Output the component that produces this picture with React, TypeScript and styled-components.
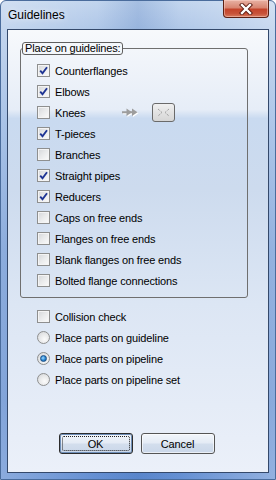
import styled, { createGlobalStyle } from "styled-components";

const GlobalStyle = createGlobalStyle`
    html, body {
        margin: 0;
        padding: 0;
        background: #ffffff;
    }
    body {
        font-family: "Liberation Sans", Arial, sans-serif;
    }
`;

const Window = styled.div`
    width: 276px;
    height: 480px;
    box-sizing: border-box;
    display: flex;
    flex-direction: column;
    padding: 0 6px 6px 6px;
    border-radius: 6px 6px 0 0;
    border: 1px solid #4a6c9c;
    background:
        linear-gradient(90deg, rgba(255, 255, 255, 0.25) 0%, rgba(255, 255, 255, 0) 35%, rgba(40, 90, 170, 0.18) 50%, rgba(255, 255, 255, 0) 65%, rgba(255, 255, 255, 0.3) 100%),
        linear-gradient(180deg, #c2d5ee 0px, #afc7e8 30px, #8eb0e0 120px, #6792d2 250px, #5a87cd 400px, #6590d3 480px);
`;

const TitleBar = styled.div`
    height: 28px;
    display: flex;
    justify-content: space-between;
    align-items: flex-start;
    padding-left: 1px;
`;

const Title = styled.span`
    margin-top: 7px;
    font-size: 12px;
    line-height: 15px;
    color: #000;
    text-shadow: 0 0 6px rgba(255, 255, 255, 0.9);
`;

const CloseButton = styled.div`
    width: 46px;
    height: 18px;
    margin-top: -1px;
    box-sizing: border-box;
    border: 1px solid #5c2014;
    border-top: none;
    border-radius: 0 0 4px 4px;
    background: linear-gradient(180deg, #e8b2a4 0%, #d88672 45%, #c4442b 55%, #c8533a 80%, #d77a5e 100%);
    box-shadow: inset 0 0 0 1px rgba(255, 220, 210, 0.45);
    display: flex;
    align-items: center;
    justify-content: center;
`;

const Client = styled.div`
    flex: 1;
    display: flex;
    flex-direction: column;
    border: 1px solid #34496b;
    background: linear-gradient(180deg, #f7f9fc 0%, #e6edf7 18%, #c9daf0 20%, #cddbee 36%, #dce6f4 62%, #ebf0f9 100%);
    font-size: 11px;
    letter-spacing: -0.15px;
    color: #000;
`;

const GroupBox = styled.fieldset`
    margin: 12px 20px 0 12px;
    padding: 0 0 6px 1px;
    border: 1px solid #6f6f6f;
    border-radius: 3px;
    min-width: 0;
`;

const GroupLabel = styled.legend`
    padding: 0 2px;
    margin: 0;
    border: 1px solid #5f5f5f;
    border-radius: 3px;
    background: #f4f7fb;
    line-height: 11px;
`;

const OptionList = styled.div`
    display: flex;
    flex-direction: column;
    padding: 5px 0 0 15px;
`;

const Row = styled.div`
    height: 21px;
    display: flex;
    align-items: center;
    gap: 5px;
`;

const LabelText = styled.span<{ $minWidth?: number }>`
    min-width: ${(p) => p.$minWidth || 0}px;
    white-space: nowrap;
`;

const Box = styled.span`
    width: 13px;
    height: 13px;
    box-sizing: border-box;
    border: 1px solid #8e8f8f;
    background: linear-gradient(135deg, #d4d6d9 0%, #eaebec 50%, #fbfbfb 100%);
    box-shadow: inset 0 0 0 1px #f4f4f4;
    display: flex;
    align-items: center;
    justify-content: center;
    flex-shrink: 0;
`;

const Round = styled.span<{ $on: boolean }>`
    width: 13px;
    height: 13px;
    box-sizing: border-box;
    border-radius: 50%;
    border: 1px solid #8e8f8f;
    background: radial-gradient(circle at 60% 65%, #fbfbfb 0%, #e6e7e8 55%, #cfd1d4 100%);
    display: flex;
    align-items: center;
    justify-content: center;
    flex-shrink: 0;

    &::after {
        content: "";
        display: ${(p) => (p.$on ? "block" : "none")};
        width: 7px;
        height: 7px;
        box-sizing: border-box;
        border-radius: 50%;
        border: 1px solid #1c4f86;
        background: radial-gradient(circle at 40% 40%, #a6dbff 0%, #2b8ad6 50%, #0f4f95 100%);
    }
`;

const Extras = styled.span`
    display: flex;
    align-items: center;
    gap: 13px;
`;

const SmallButton = styled.span`
    width: 23px;
    height: 19px;
    box-sizing: border-box;
    border: 1px solid #6a6a6a;
    border-radius: 3px;
    background: linear-gradient(180deg, #f0f0f0 0%, #e2e2e2 50%, #d6d6d6 100%);
    display: flex;
    align-items: center;
    justify-content: center;
`;

const BottomOptions = styled.div`
    display: flex;
    flex-direction: column;
    margin-top: 8px;
    padding-left: 29px;
`;

const ButtonRow = styled.div`
    margin-top: auto;
    padding: 0 3px 18px 0;
    display: flex;
    justify-content: center;
    gap: 8px;
`;

const Button = styled.button<{ $default?: boolean }>`
    width: 74px;
    height: 21px;
    box-sizing: border-box;
    padding: 0;
    border: 1px solid ${(p) => (p.$default ? "#2c2c2c" : "#555")};
    border-radius: 3px;
    background: linear-gradient(180deg, #f2f6fb 0%, #e4ebf5 48%, #d3deed 52%, #cad7e9 100%);
    box-shadow: inset 0 0 0 1px ${(p) => (p.$default ? "#6f8fb8" : "rgba(255, 255, 255, 0.6)")};
    font-family: "Liberation Sans", Arial, sans-serif;
    font-size: 11px;
    letter-spacing: -0.15px;
    color: #000;
    position: relative;

    &::after {
        content: "";
        display: ${(p) => (p.$default ? "block" : "none")};
        position: absolute;
        inset: 2px;
        border: 1px dotted #222;
        border-radius: 2px;
    }
`;

const CheckMark = () => (
    <svg width="9" height="9" viewBox="0 0 9 9">
        <path d="M1.2 4.6 L3.5 7.2 L8 1.2" fill="none" stroke="#1f3594" strokeWidth="1.9" />
    </svg>
);

const CloseGlyph = () => (
    <svg width="14" height="12" viewBox="0 0 14 12">
        <path d="M3 2 L11 10 M11 2 L3 10" stroke="#5a1a10" strokeWidth="4.2" strokeLinecap="square" />
        <path d="M3 2 L11 10 M11 2 L3 10" stroke="#ffffff" strokeWidth="2.4" strokeLinecap="square" />
    </svg>
);

const ArrowGlyph = () => (
    <svg width="17" height="10" viewBox="0 0 17 10">
        <g fill="#ffffff" transform="translate(1 1)">
            <rect x="0" y="3.25" width="10" height="2" />
            <path d="M4.5 0.5 L10 4.25 L4.5 8 Z" />
            <path d="M10 0.5 L15.5 4.25 L10 8 Z" />
        </g>
        <g fill="#9d9d9d">
            <rect x="0" y="3.25" width="10" height="2" />
            <path d="M4.5 0.5 L10 4.25 L4.5 8 Z" />
            <path d="M10 0.5 L15.5 4.25 L10 8 Z" />
        </g>
    </svg>
);

const MergeGlyph = () => (
    <svg width="13" height="9" viewBox="0 0 13 9">
        <path d="M1 1 L5 4.5 L1 8 M12 1 L8 4.5 L12 8" fill="none" stroke="#8c8c8c" strokeWidth="1" strokeDasharray="1 1" />
    </svg>
);

interface OptionProps {
    label: string;
    checked: boolean;
    radio?: boolean;
    extras?: boolean;
}

const Option = ({ label, checked, radio, extras }: OptionProps) => (
    <Row>
        {radio ? (
            <Round $on={checked} />
        ) : (
            <Box>{checked && <CheckMark />}</Box>
        )}
        <LabelText $minWidth={extras ? 62 : 0}>{label}</LabelText>
        {extras && (
            <Extras>
                <ArrowGlyph />
                <SmallButton>
                    <MergeGlyph />
                </SmallButton>
            </Extras>
        )}
    </Row>
);

const guidelineParts = [
    { label: "Counterflanges", checked: true },
    { label: "Elbows", checked: true },
    { label: "Knees", checked: false, extras: true },
    { label: "T-pieces", checked: true },
    { label: "Branches", checked: false },
    { label: "Straight pipes", checked: true },
    { label: "Reducers", checked: true },
    { label: "Caps on free ends", checked: false },
    { label: "Flanges on free ends", checked: false },
    { label: "Blank flanges on free ends", checked: false },
    { label: "Bolted flange connections", checked: false },
];

const placeModes = [
    { label: "Place parts on guideline", checked: false },
    { label: "Place parts on pipeline", checked: true },
    { label: "Place parts on pipeline set", checked: false },
];

const App = () => {
    return (
        <>
            <GlobalStyle />
            <Window>
                <TitleBar>
                    <Title>Guidelines</Title>
                    <CloseButton>
                        <CloseGlyph />
                    </CloseButton>
                </TitleBar>
                <Client>
                    <GroupBox>
                        <GroupLabel>Place on guidelines:</GroupLabel>
                        <OptionList>
                            {guidelineParts.map((p) => (
                                <Option key={p.label} {...p} />
                            ))}
                        </OptionList>
                    </GroupBox>

                    <BottomOptions>
                        <Option label="Collision check" checked={false} />
                        {placeModes.map((m) => (
                            <Option key={m.label} radio {...m} />
                        ))}
                    </BottomOptions>

                    <ButtonRow>
                        <Button $default>OK</Button>
                        <Button>Cancel</Button>
                    </ButtonRow>
                </Client>
            </Window>
        </>
    );
};

export default App;
